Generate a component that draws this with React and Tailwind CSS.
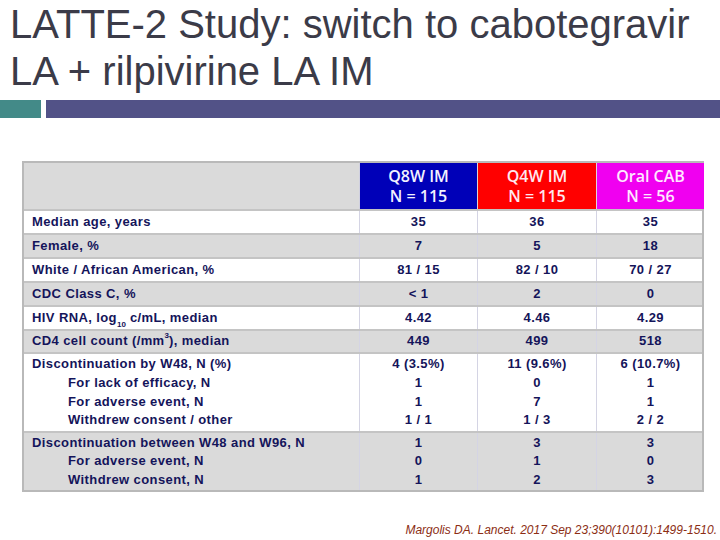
import React from "react";

const cols = "grid grid-cols-[335px_118px_119px_108px]";
const labelFont = { fontFamily: '"Liberation Sans", Arial, sans-serif' };

const rows = [
  { bg: "bg-white", label: ["Median age, years"], v: [["35"], ["36"], ["35"]] },
  { bg: "bg-[#dadada]", label: ["Female, %"], v: [["7"], ["5"], ["18"]] },
  { bg: "bg-white", label: ["White / African American, %"], v: [["81 / 15"], ["82 / 10"], ["70 / 27"]] },
  { bg: "bg-[#dadada]", label: ["CDC Class C, %"], v: [["< 1"], ["2"], ["0"]] },
  { bg: "bg-white", label: ["HIV"], v: [["4.42"], ["4.46"], ["4.29"]], special: "hiv" },
  { bg: "bg-[#dadada]", label: ["CD4"], v: [["449"], ["499"], ["518"]], special: "cd4", h: "h-[23px]" },
  {
    bg: "bg-white",
    label: ["Discontinuation by W48, N (%)", "For lack of efficacy, N", "For adverse event, N", "Withdrew consent / other"],
    v: [
      ["4 (3.5%)", "1", "1", "1 / 1"],
      ["11 (9.6%)", "0", "7", "1 / 3"],
      ["6 (10.7%)", "1", "1", "2 / 2"],
    ],
    h: "h-[79px]",
  },
  {
    bg: "bg-[#dadada]",
    label: ["Discontinuation between W48 and W96, N", "For adverse event, N", "Withdrew consent, N"],
    v: [["1", "0", "1"], ["3", "1", "2"], ["3", "0", "3"]],
    h: "h-[57px]",
    last: true,
  },
];

function Label({ row }) {
  if (row.special === "hiv")
    return (
      <span>
        HIV RNA, log<sub className="text-[8px] align-[-3px] tracking-normal">10</sub> c/mL, median
      </span>
    );
  if (row.special === "cd4")
    return (
      <span>
        CD4 cell count (/mm<sup className="text-[8px] align-[3px] tracking-normal">3</sup>), median
      </span>
    );
  return null;
}

export default function App() {
  return (
    <div className="w-[720px] h-[540px] bg-white relative overflow-hidden">
      <div
        className="pl-[10px] pt-[1px] text-[40px] leading-[47px] text-[#3b3b48]"
        style={labelFont}
      >
        <div>LATTE-2 Study: switch to cabotegravir</div>
        <div>LA + rilpivirine LA IM</div>
      </div>
      <div className="flex mt-[5px] h-[18px]">
        <div className="w-[41px] bg-[#438a88]" />
        <div className="w-[5px]" />
        <div className="flex-1 bg-[#525287]" />
      </div>

      <div className="ml-[22px] mt-[43px] w-[682px] border-2 border-[#b9b9b9]" style={labelFont}>
        <div className={`${cols} h-[48px] border-b-2 border-[#c4c4c4]`}>
          <div className="bg-[#dadada]" />
          <div
            className="bg-[#0000b8] text-[#f2f2ff] flex flex-col items-center justify-center text-[16px] leading-[20px] font-semibold border-l border-[#d0d0e0]"
            style={{ fontFamily: '"Open Sans", sans-serif' }}
          >
            <div>Q8W IM</div>
            <div>N = 115</div>
          </div>
          <div
            className="bg-[#ff0000] text-[#ffe8f0] flex flex-col items-center justify-center text-[16px] leading-[20px] font-semibold border-l border-[#e0d0d0]"
            style={{ fontFamily: '"Open Sans", sans-serif' }}
          >
            <div>Q4W IM</div>
            <div>N = 115</div>
          </div>
          <div
            className="bg-[#f000f0] text-[#ffe8ff] flex flex-col items-center justify-center text-[16px] leading-[20px] font-semibold border-l border-[#e0d0e0]"
            style={{ fontFamily: '"Open Sans", sans-serif' }}
          >
            <div>Oral CAB</div>
            <div>N = 56</div>
          </div>
        </div>
        {rows.map((row, i) => (
          <div
            key={i}
            className={`${cols} ${row.bg} ${row.h || "h-[24px]"} ${row.last ? "" : "border-b-2 border-[#c4c4c4]"} text-[13px] font-bold text-[#14145a] tracking-[0.4px]`}
          >
            <div className="pl-[8px] flex flex-col justify-center leading-[18.6px]">
              {row.special ? (
                <Label row={row} />
              ) : (
                row.label.map((t, j) => (
                  <div key={j} className={j > 0 ? "pl-[36px]" : ""}>
                    {t}
                  </div>
                ))
              )}
            </div>
            {row.v.map((c, k) => (
              <div
                key={k}
                className="border-l border-[#d4d4e4] flex flex-col items-center justify-center leading-[18.6px]"
              >
                {c.map((t, j) => (
                  <div key={j}>{t}</div>
                ))}
              </div>
            ))}
          </div>
        ))}
      </div>

      <div
        className="absolute right-[3px] top-[521px] text-[12px] italic text-[#8c2e14]"
        style={labelFont}
      >
        Margolis DA. Lancet. 2017 Sep 23;390(10101):1499-1510.
      </div>
    </div>
  );
}
